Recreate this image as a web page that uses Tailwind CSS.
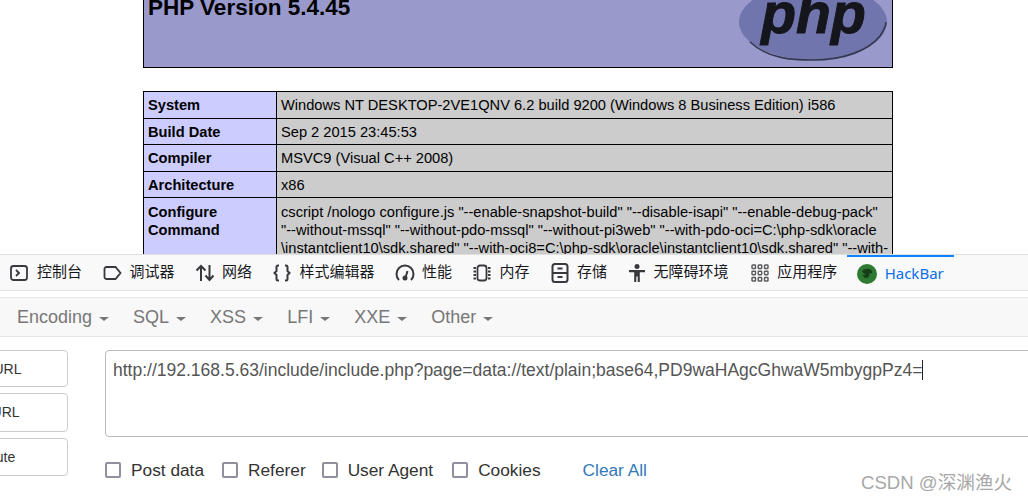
<!DOCTYPE html>
<html lang="en">
<head>
  <meta charset="UTF-8" />
  <title>phpinfo + HackBar</title>
  <script src="https://cdn.jsdelivr.net/npm/@tailwindcss/browser@4"></script>
</head>
<body class="relative h-[501px] w-[1028px] overflow-hidden bg-white font-['Liberation_Sans','Noto_Sans_CJK_SC',sans-serif]">

  <!-- phpinfo page behind the devtools -->
  <div class="h-[254px] overflow-hidden pl-[143px]">
    <div class="relative -mt-[12px] flex h-[80px] w-[750px] items-start overflow-hidden border border-black bg-[#9999cc] pl-[4px] pt-[6px]">
      <h1 class="text-[22.5px] leading-[26px] font-bold text-black">PHP Version 5.4.45</h1>
      <svg class="absolute left-[594px] top-[0px]" width="150" height="76" viewBox="0 0 150 76">
        <ellipse cx="75" cy="33" rx="74" ry="38" fill="#7075ad"/>
        <path d="M12 53C30 70 55 71 75 71c30 0 55-9 67-24 4-6 6-10 6-14" fill="none" stroke="#34384f" stroke-width="1.6"/>
        <text x="75.500" y="44" text-anchor="middle" font-family="Liberation Sans" font-weight="700" font-style="italic" font-size="57" fill="#15151c" stroke="#15151c" stroke-width="1">php</text>
      </svg>
    </div>
    <table class="mt-[23px] w-[750px] table-fixed border-collapse text-[14.65px] leading-[18px] text-black">
      <tbody>
        <tr class="h-[26.5px]">
          <td class="w-[133px] border border-black bg-[#ccccff] px-[4px] pt-[1px] font-bold">System</td>
          <td class="border border-black bg-[#cccccc] px-[4px] pt-[1px]">Windows NT DESKTOP-2VE1QNV 6.2 build 9200 (Windows 8 Business Edition) i586</td>
        </tr>
        <tr class="h-[26.5px]">
          <td class="border border-black bg-[#ccccff] px-[4px] pt-[1px] font-bold">Build Date</td>
          <td class="border border-black bg-[#cccccc] px-[4px] pt-[1px]">Sep 2 2015 23:45:53</td>
        </tr>
        <tr class="h-[26.5px]">
          <td class="border border-black bg-[#ccccff] px-[4px] pt-[1px] font-bold">Compiler</td>
          <td class="border border-black bg-[#cccccc] px-[4px] pt-[1px]">MSVC9 (Visual C++ 2008)</td>
        </tr>
        <tr class="h-[26.5px]">
          <td class="border border-black bg-[#ccccff] px-[4px] pt-[1px] font-bold">Architecture</td>
          <td class="border border-black bg-[#cccccc] px-[4px] pt-[1px]">x86</td>
        </tr>
        <tr>
          <td class="border border-black bg-[#ccccff] px-[4px] pt-[5px] align-top font-bold">Configure<br>Command</td>
          <td class="border border-black bg-[#cccccc] px-[4px] pt-[5px] align-top whitespace-nowrap">cscript /nologo configure.js "--enable-snapshot-build" "--disable-isapi" "--enable-debug-pack"<br>"--without-mssql" "--without-pdo-mssql" "--without-pi3web" "--with-pdo-oci=C:\php-sdk\oracle<br>\instantclient10\sdk.shared" "--with-oci8=C:\php-sdk\oracle\instantclient10\sdk.shared" "--with-</td>
        </tr>
      </tbody>
    </table>
  </div>

  <!-- devtools tabs -->
  <div class="flex h-[37px] items-center gap-[20.5px] border-y border-[#e0e0e2] bg-[#f9f9fa] pl-[10px] text-[15px] text-[#18181a]">
    <div class="flex items-center gap-[9px]">
      <svg width="18" height="18" viewBox="0 0 18 18" fill="none" stroke="#38383d" stroke-width="1.8"><rect x="1" y="2" width="16" height="14" rx="2.5"/><path d="M6 6l3 3-3 3"/></svg>
      <span>控制台</span>
    </div>
    <div class="flex items-center gap-[8px]">
      <svg width="19" height="18" viewBox="0 0 19 18" fill="none" stroke="#38383d" stroke-width="1.8"><path d="M3.5 3h9l5 6-5 6h-9a2 2 0 0 1-2-2V5a2 2 0 0 1 2-2z"/></svg>
      <span>调试器</span>
    </div>
    <div class="flex items-center gap-[7px]">
      <svg width="20" height="18" viewBox="0 0 20 18" fill="none" stroke="#38383d" stroke-width="2"><path d="M6 17V2M1.5 6.5L6 2l4.500 4.500M14.500 1v15M10.500 11.500l4 4.500 4-4.500"/></svg>
      <span>网络</span>
    </div>
    <div class="flex items-center gap-[9px]">
      <svg width="18" height="18" viewBox="0 0 18 18" fill="none" stroke="#38383d" stroke-width="2"><path d="M6 1.500H5a1.500 1.500 0 0 0-1.500 1.500v4L1.500 9l2 2v4A1.500 1.500 0 0 0 5 16.500h1M12 1.500h1A1.500 1.500 0 0 1 14.500 3v4l2 2-2 2v4a1.500 1.500 0 0 1-1.500 1.500h-1"/></svg>
      <span>样式编辑器</span>
    </div>
    <div class="flex items-center gap-[7px]">
      <svg width="20" height="18" viewBox="0 0 20 18" fill="none" stroke="#38383d" stroke-width="2"><path d="M4 16A8.500 8.500 0 1 1 16 16"/><path d="M12.500 7l-2 6.500"/><circle cx="10" cy="14" r="1.500" fill="#38383d"/></svg>
      <span>性能</span>
    </div>
    <div class="flex items-center gap-[9px]">
      <svg width="18" height="18" viewBox="0 0 18 18" fill="none" stroke="#38383d" stroke-width="1.800"><rect x="4.500" y="1.500" width="9" height="15" rx="2.500"/><path d="M.5 4h2.500M.5 7.500h2.500M.5 11h2.500M.5 14.500h2.500M15 4h2.500M15 7.500h2.500M15 11h2.500M15 14.500h2.500"/></svg>
      <span>内存</span>
    </div>
    <div class="ml-[1px] flex items-center gap-[8px]">
      <svg width="18" height="20" viewBox="0 0 18 20" fill="none" stroke="#38383d" stroke-width="2"><rect x="1.500" y="1" width="15" height="18" rx="2.500"/><path d="M1.500 10h15M6.500 5.500h5M6.500 14h5"/></svg>
      <span>存储</span>
    </div>
    <div class="flex items-center gap-[8px]">
      <svg width="18" height="20" viewBox="0 0 18 20" fill="#38383d"><circle cx="9" cy="3.500" r="2.500"/><path d="M1 7h16v2.200h-5.200V19H9.700v-5.500H8.300V19H6.200V9.200H1z"/></svg>
      <span>无障碍环境</span>
    </div>
    <div class="ml-[2px] flex items-center gap-[8px]">
      <svg width="18" height="18" viewBox="0 0 18 18" fill="none" stroke="#5a5a5f" stroke-width="1.400"><rect x="1" y="1" width="3.500" height="3.500" rx=".6"/><rect x="7.200" y="1" width="3.500" height="3.500" rx=".6"/><rect x="13.500" y="1" width="3.500" height="3.500" rx=".6"/><rect x="1" y="7.200" width="3.500" height="3.500" rx=".6"/><rect x="7.200" y="7.200" width="3.500" height="3.500" rx=".6"/><rect x="13.500" y="7.200" width="3.500" height="3.500" rx=".6"/><rect x="1" y="13.500" width="3.500" height="3.500" rx=".6"/><rect x="7.200" y="13.500" width="3.500" height="3.500" rx=".6"/><rect x="13.500" y="13.500" width="3.500" height="3.500" rx=".6"/></svg>
      <span>应用程序</span>
    </div>
    <div class="-ml-[11px] flex h-full items-center gap-[8px] border-t-2 border-[#0a84ff] px-[10px] font-['Noto_Sans',sans-serif] text-[#0a6fe8]">
      <svg width="20" height="20" viewBox="0 0 20 20"><circle cx="10" cy="10" r="10" fill="#2f7a32"/><path d="M5 7c3-3 8-3 10 0 1 2-1 3-3 2 1 2 0 5-3 5-2 0-2-2-4-3 2 0 3 0 4-1-2 0-3-1-4-3z" fill="#173d1b"/></svg>
      <span>HackBar</span>
    </div>
  </div>

  <!-- hackbar menu -->
  <nav class="mt-[6px] flex h-[40px] items-center gap-[24px] border-y border-[#e7e7e7] bg-[#f8f8f8] pl-[17px] text-[18px] text-[#777777]">
    <span class="flex items-center gap-[7px]">Encoding <i class="mt-[3px] border-x-[5px] border-t-[4px] border-x-transparent border-t-[#777777]"></i></span>
    <span class="flex items-center gap-[7px]">SQL <i class="mt-[3px] border-x-[5px] border-t-[4px] border-x-transparent border-t-[#777777]"></i></span>
    <span class="flex items-center gap-[7px]">XSS <i class="mt-[3px] border-x-[5px] border-t-[4px] border-x-transparent border-t-[#777777]"></i></span>
    <span class="flex items-center gap-[7px]">LFI <i class="mt-[3px] border-x-[5px] border-t-[4px] border-x-transparent border-t-[#777777]"></i></span>
    <span class="flex items-center gap-[7px]">XXE <i class="mt-[3px] border-x-[5px] border-t-[4px] border-x-transparent border-t-[#777777]"></i></span>
    <span class="flex items-center gap-[7px]">Other <i class="mt-[3px] border-x-[5px] border-t-[4px] border-x-transparent border-t-[#777777]"></i></span>
  </nav>

  <!-- hackbar body -->
  <div class="mt-[13px] flex w-[1200px] gap-[37px]">
    <div class="-ml-[88px] flex w-[156px] shrink-0 flex-col gap-[6px] text-[14px] text-[#333333]">
      <button class="h-[37px] rounded-[4px] border border-[#cccccc] bg-white pt-[1px]">Load URL</button>
      <button class="h-[39px] rounded-[4px] border border-[#cccccc] bg-white">Split URL</button>
      <button class="h-[38px] rounded-[4px] border border-[#cccccc] bg-white">Execute</button>
    </div>
    <div>
      <div class="h-[87px] w-[1000px] rounded-[4px] border border-[#bbbbbb] bg-white px-[7px] pt-[8px] text-[17.5px] leading-[22px] text-[#555555]">http://192.168.5.63/include/include.php?page=data://text/plain;base64,PD9waHAgcGhwaW5mbygpPz4=<span class="border-l border-[#222222]"></span></div>
      <div class="mt-[22px] flex items-center text-[17.3px] leading-[22px] text-[#333333]">
        <label class="flex items-center gap-[10px]"><input type="checkbox" class="size-[16px] appearance-none rounded-[2px] border-2 border-[#8f8f9d] bg-white"> Post data</label>
        <label class="ml-[18px] flex items-center gap-[10px]"><input type="checkbox" class="size-[16px] appearance-none rounded-[2px] border-2 border-[#8f8f9d] bg-white"> Referer</label>
        <label class="ml-[16px] flex items-center gap-[10px]"><input type="checkbox" class="size-[16px] appearance-none rounded-[2px] border-2 border-[#8f8f9d] bg-white"> User Agent</label>
        <label class="ml-[19px] flex items-center gap-[10px]"><input type="checkbox" class="size-[16px] appearance-none rounded-[2px] border-2 border-[#8f8f9d] bg-white"> Cookies</label>
        <a class="ml-[42px] text-[#337ab7]">Clear All</a>
      </div>
    </div>
  </div>

  <!-- watermark -->
  <div class="absolute left-[861px] top-[471px] text-[18.6px] leading-[24px] text-[#a8a8a8]">CSDN @深渊渔火</div>
</body>
</html>
